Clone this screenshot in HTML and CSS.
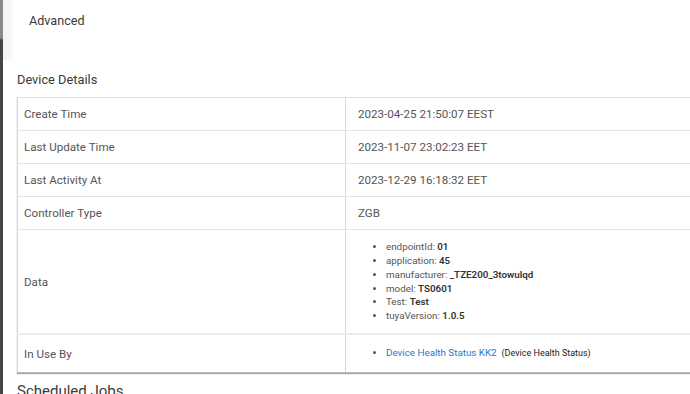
FILE: index.html
```html
<!DOCTYPE html>
<html>
<head>
<meta charset="utf-8">
<link rel="stylesheet" href="styles.css">
</head>
<body>
<div class="frame">
  <div class="edge"></div>
  <div class="main">
    <div class="adv">Advanced</div>
    <h2 class="section">Device Details</h2>
    <table class="details">
      <tr class="r"><td class="k">Create Time</td><td class="v">2023-04-25 21:50:07 EEST</td></tr>
      <tr class="r"><td class="k">Last Update Time</td><td class="v">2023-11-07 23:02:23 EET</td></tr>
      <tr class="r"><td class="k">Last Activity At</td><td class="v">2023-12-29 16:18:32 EET</td></tr>
      <tr class="r"><td class="k">Controller Type</td><td class="v">ZGB</td></tr>
      <tr class="r data"><td class="k">Data</td><td class="v">
        <ul class="list">
          <li>endpointId: <b>01</b></li>
          <li>application: <b>45</b></li>
          <li>manufacturer: <b>_TZE200_3towulqd</b></li>
          <li>model: <b>TS0601</b></li>
          <li>Test: <b>Test</b></li>
          <li>tuyaVersion: <b>1.0.5</b></li>
        </ul>
      </td></tr>
      <tr class="r use"><td class="k">In Use By</td><td class="v">
        <ul class="list">
          <li><a class="link" href="#">Device Health Status KK2</a>&nbsp; <span class="dark">(Device Health Status)</span></li>
        </ul>
      </td></tr>
    </table>
    <h2 class="section next">Scheduled Jobs</h2>
  </div>
</div>
</body>
</html>
```
FILE: styles.css
```css
html, body {
  margin: 0;
  padding: 0;
  background: #fff;
  overflow: hidden;
  width: 690px;
  height: 394px;
}
body {
  font-family: Roboto, "Liberation Sans", sans-serif;
  color: #444;
}
.frame {
  display: flex;
  height: 394px;
}
.edge {
  width: 3px;
  flex: 0 0 3px;
  background: linear-gradient(to bottom, #8c8888 0, #8c8888 38px, #4a4343 40px, #4a4343 100%);
}
.main {
  flex: 1;
  min-width: 0;
  overflow: hidden;
  background: linear-gradient(to right, #f3f3f3 0, #f7f7f7 8px, #fff 10px) no-repeat;
  background-size: 100% 60px;
  padding-left: 14px;
}
.adv {
  font-size: 12.6px;
  color: #3a3a3a;
  padding: 13px 0 0 12px;
  height: 58px;
}
.section {
  margin: 0;
  font-weight: 400;
  font-size: 12.8px;
  color: #3a3a3a;
  line-height: 18px;
  height: 26px;
}
.details {
  border-collapse: collapse;
  width: 100%;
  table-layout: fixed;
  border-left: 1px solid #d6d6d6;
  border-top: 1px solid #e0e0e0;
  box-shadow: 0 1px 1px rgba(0,0,0,0.35);
  font-size: 11.6px;
  color: #555;
}
.r td {
  border-bottom: 1px solid #e4e4e4;
  padding: 0 0 0 6px;
  height: 32px;
  vertical-align: middle;
}
.k {
  width: 321px;
  border-right: 1px solid #d6d6d6;
}
.v {
  padding-left: 12px !important;
  color: #555;
}
.r.data td {
  height: 103px;
  border-bottom: 2px solid #ececec;
}
.r.use td {
  height: 37px;
  border-bottom: 1px solid #b8b8b8;
}
.list {
  margin: 0;
  padding-left: 28px;
  font-size: 9.8px;
  line-height: 13.7px;
  color: #555;
}
.list b {
  color: #333;
  font-weight: 600;
}
.link {
  color: #1e78d2;
  text-decoration: none;
}
.dark {
  color: #222;
  font-size: 9px;
}
.next {
  margin-top: 9px;
  font-size: 15px;
}
```
